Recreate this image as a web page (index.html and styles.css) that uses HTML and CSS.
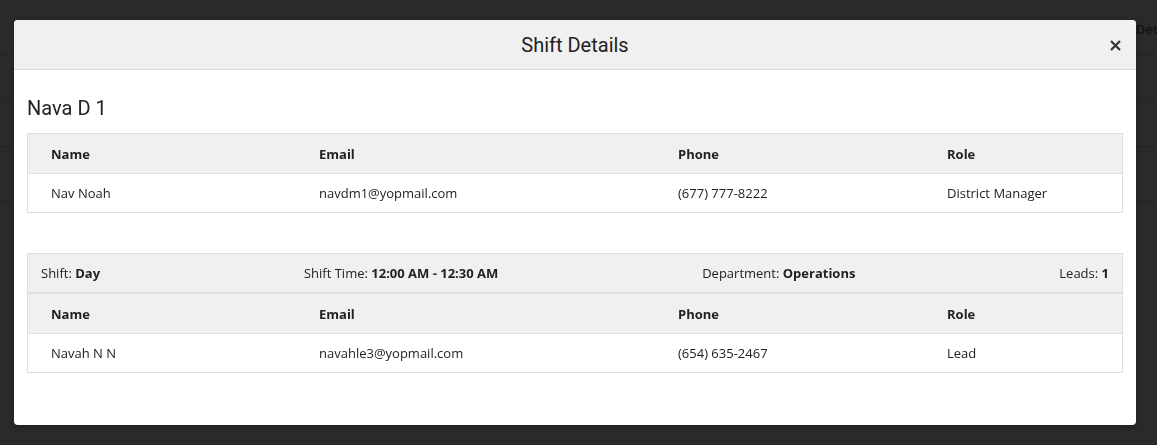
FILE: index.html
```html
<!DOCTYPE html>
<html>
<head>
<meta charset="utf-8">
<link rel="stylesheet" href="styles.css">
</head>
<body>
<div class="page">
  <div class="page-top"><span class="page-link">Details</span></div>
  <div class="page-row"></div>
  <div class="page-row"></div>
  <div class="page-row short"></div>
</div>
<div class="overlay">
  <div class="modal">
    <div class="modal-header">
      <h3 class="modal-title">Shift Details</h3>
      <button class="close" type="button" aria-label="Close">
        <svg width="11" height="11" viewBox="0 0 11 11"><path d="M1 1 L10 10 M10 1 L1 10" stroke="#333" stroke-width="2.2" stroke-linecap="butt"/></svg>
      </button>
    </div>
    <div class="modal-body">
      <h4 class="group-title">Nava D 1</h4>
      <div class="tbl">
        <div class="row head">
          <div class="cell">Name</div>
          <div class="cell">Email</div>
          <div class="cell">Phone</div>
          <div class="cell">Role</div>
        </div>
        <div class="row">
          <div class="cell">Nav Noah</div>
          <div class="cell">navdm1@yopmail.com</div>
          <div class="cell">(677) 777-8222</div>
          <div class="cell">District Manager</div>
        </div>
      </div>
      <div class="tbl second">
        <div class="info">
          <span>Shift: <b>Day</b></span>
          <span>Shift Time: <b>12:00 AM - 12:30 AM</b></span>
          <span>Department: <b>Operations</b></span>
          <span>Leads: <b>1</b></span>
        </div>
        <div class="row head">
          <div class="cell">Name</div>
          <div class="cell">Email</div>
          <div class="cell">Phone</div>
          <div class="cell">Role</div>
        </div>
        <div class="row">
          <div class="cell">Navah N N</div>
          <div class="cell">navahle3@yopmail.com</div>
          <div class="cell">(654) 635-2467</div>
          <div class="cell">Lead</div>
        </div>
      </div>
    </div>
  </div>
</div>
</body>
</html>
```

FILE: styles.css
```css
html, body {
  margin: 0;
  padding: 0;
}
body {
  background: #2a2a2a;
  width: 1157px;
  height: 445px;
  overflow: hidden;
  font-family: "Open Sans", "Noto Sans", sans-serif;
  color: #222;
}
.page {
  height: 445px;
}
.page-top {
  height: 54px;
  border-bottom: 1px solid #242424;
  display: flex;
  justify-content: flex-end;
  align-items: flex-start;
  overflow: hidden;
}
.page-link {
  margin-top: 20px;
  margin-right: -22px;
  font-size: 13px;
  font-weight: 600;
  color: #121212;
}
.page-row {
  height: 45px;
  border-bottom: 1px solid #242424;
}
.page-row.short {
  height: 53px;
}
.overlay {
  position: fixed;
  inset: 0;
  padding: 20px 21px 0 14px;
}
.modal {
  background: #fff;
  border-radius: 4px;
  height: 405px;
  overflow: hidden;
  box-shadow: 0 2px 6px rgba(0,0,0,0.3);
}
.modal-header {
  height: 49px;
  background: #f0f0f0;
  border-bottom: 1px solid #dcdcdc;
  display: flex;
  align-items: center;
  justify-content: center;
  position: relative;
}
.modal-title {
  margin: 0;
  font-family: Roboto, "Noto Sans", sans-serif;
  font-weight: 400;
  font-size: 20px;
  color: #222;
  margin-top: 1px;
}
.close {
  position: absolute;
  right: 15px;
  top: 20px;
  border: 0;
  background: none;
  padding: 0;
  width: 11px;
  height: 11px;
  display: block;
}
.close svg {
  display: block;
}
.modal-body {
  padding: 26px 13px 52px 13px;
}
.group-title {
  margin: 0 0 13px 0;
  font-family: Roboto, "Noto Sans", sans-serif;
  font-weight: 400;
  font-size: 20px;
  line-height: 24px;
  color: #222;
}
.tbl {
  border: 1px solid #dedede;
  font-size: 13px;
}
.tbl.second {
  margin-top: 40px;
}
.row {
  display: grid;
  grid-template-columns: 268px 359px 269px 1fr;
  height: 38px;
  align-items: center;
}
.row.head {
  height: 39px;
  background: #f0f0f0;
  border-bottom: 1px solid #dedede;
  font-weight: 700;
}
.cell {
  padding-left: 23px;
  white-space: nowrap;
}
.info {
  height: 38px;
  background: #f0f0f0;
  border-bottom: 2px solid #dedede;
  display: flex;
  justify-content: space-between;
  align-items: center;
  padding: 0 13px;
  font-size: 13px;
}
.info b {
  font-weight: 700;
}
```
